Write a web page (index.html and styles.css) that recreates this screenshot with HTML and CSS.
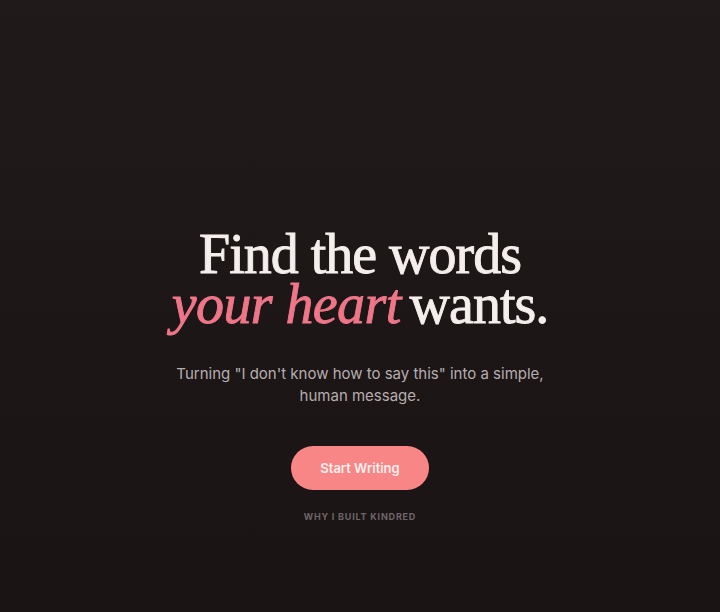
FILE: index.html
```html
<!DOCTYPE html>
<html lang="en">
<head>
<meta charset="utf-8">
<title>Kindred</title>
<link rel="stylesheet" href="styles.css">
</head>
<body>
<main class="hero">
  <h1 class="title"><span class="line">Find the words</span><span class="line"><em class="accent">your heart</em> wants.</span></h1>
  <p class="lead">Turning "I don't know how to say this" into a simple,<br>human message.</p>
  <a class="cta" href="#">Start Writing</a>
  <a class="why" href="#">WHY I BUILT KINDRED</a>
</main>
</body>
</html>
```
FILE: styles.css
```css
html, body {
  margin: 0;
  padding: 0;
  height: 100%;
}
body {
  background: linear-gradient(180deg, #201a1a 0%, #1c1617 55%, #1b1415 100%);
  color: #f3eceb;
  font-family: Inter, "Noto Sans", sans-serif;
}
.hero {
  display: flex;
  flex-direction: column;
  align-items: center;
  text-align: center;
  padding-top: 229px;
}
.title {
  margin: 0;
  font-family: "Liberation Serif", serif;
  font-weight: 400;
  font-size: 56px;
  line-height: 50px;
  letter-spacing: -1px;
  color: #f4eeec;
  -webkit-text-stroke: 0.9px #f4eeec;
  display: flex;
  flex-direction: column;
  align-items: center;
}
.line {
  display: block;
  height: 50px;
}
.accent {
  font-style: italic;
  color: #ee7688;
  -webkit-text-stroke: 0.9px #ee7688;
  letter-spacing: -0.6px;
  margin-right: -4px;
}
.lead {
  margin: 34px 0 0;
  font-size: 15px;
  line-height: 22px;
  color: #b6aeae;
}
.cta {
  margin-top: 39px;
  width: 138px;
  height: 44px;
  border-radius: 22px;
  background: #f88686;
  color: #fcefed;
  font-size: 13px;
  font-weight: 600;
  display: flex;
  align-items: center;
  justify-content: center;
  text-decoration: none;
}
.why {
  margin-top: 21px;
  font-size: 9px;
  font-weight: 700;
  letter-spacing: 0.8px;
  color: #6f6667;
  text-decoration: none;
}
```
